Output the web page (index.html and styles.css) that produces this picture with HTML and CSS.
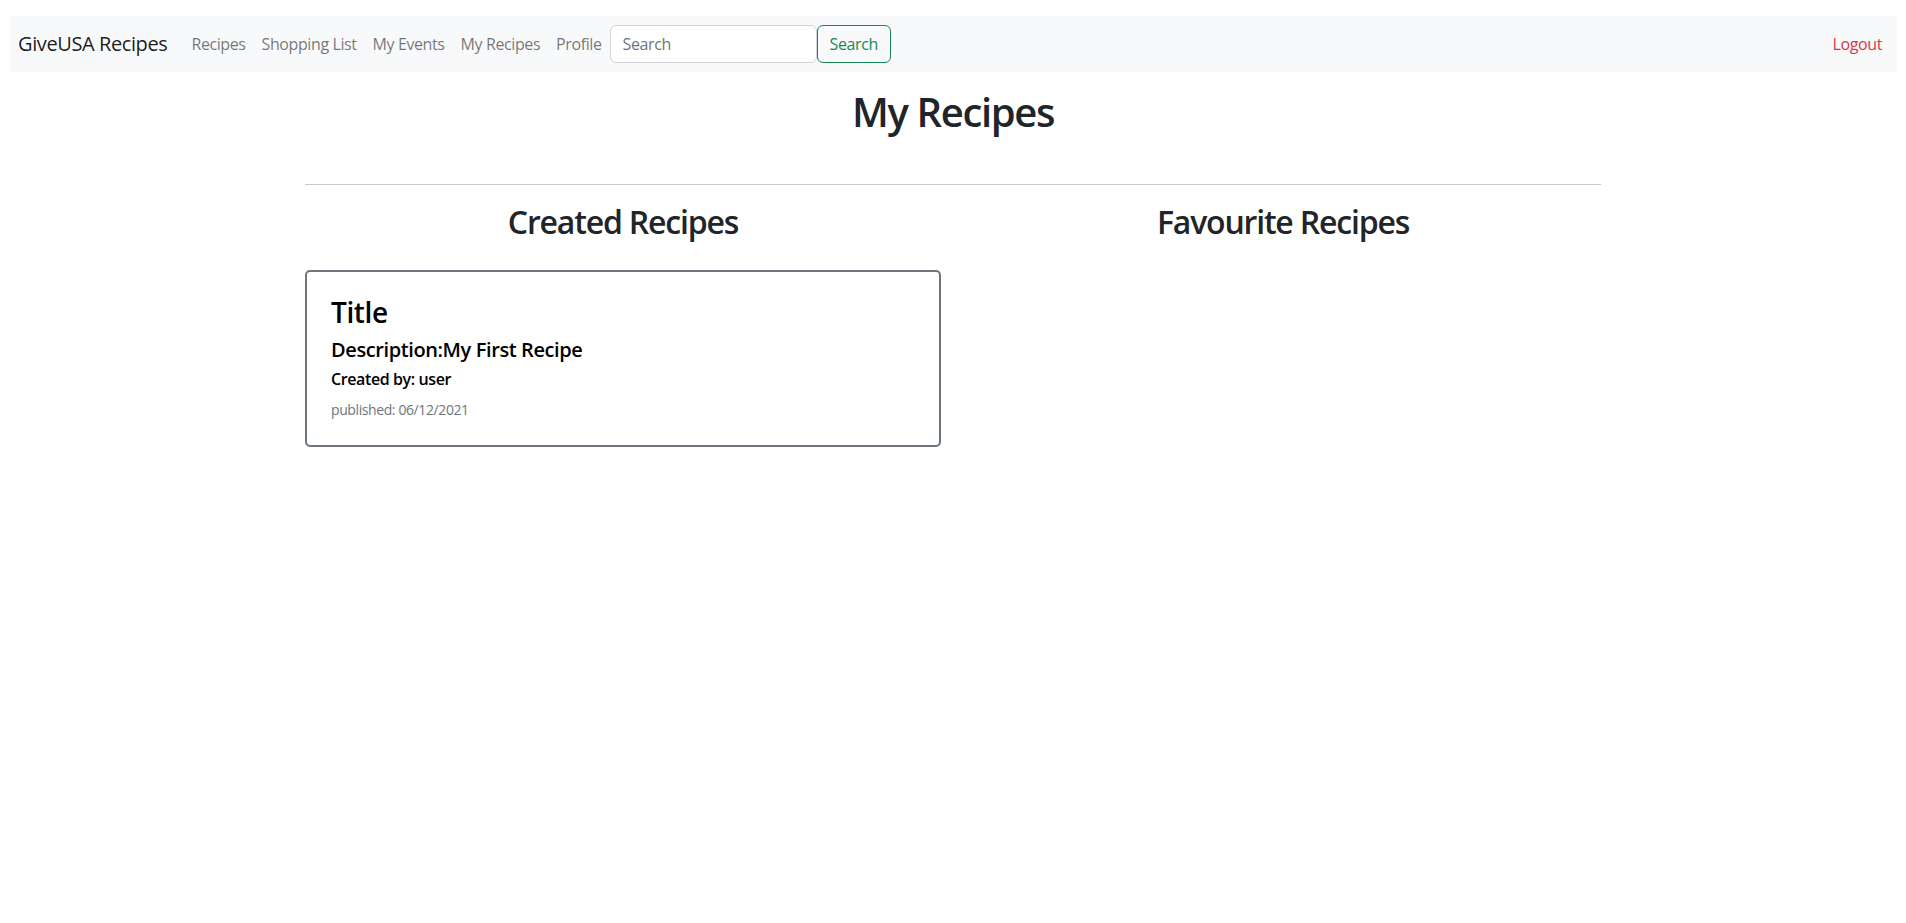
FILE: index.html
```html
<!DOCTYPE html>
<html lang="en">
<head>
<meta charset="utf-8">
<title>My Recipes</title>
<link rel="stylesheet" href="styles.css">
</head>
<body>
<nav class="navbar">
  <a class="brand" href="#">GiveUSA Recipes</a>
  <ul class="nav-links">
    <li><a class="nav-link" href="#">Recipes</a></li>
    <li><a class="nav-link" href="#">Shopping List</a></li>
    <li><a class="nav-link" href="#">My Events</a></li>
    <li><a class="nav-link" href="#">My Recipes</a></li>
    <li><a class="nav-link" href="#">Profile</a></li>
  </ul>
  <form class="search-form">
    <input class="search-input" type="search" placeholder="Search">
    <button class="search-btn" type="button">Search</button>
  </form>
  <a class="nav-link logout" href="#">Logout</a>
</nav>
<main class="container">
  <h1 class="page-title">My Recipes</h1>
  <hr class="divider">
  <div class="row">
    <section class="col">
      <h2 class="col-title">Created Recipes</h2>
      <div class="card">
        <h3 class="card-title">Title</h3>
        <h5 class="card-desc">Description:My First Recipe</h5>
        <h6 class="card-author">Created by: user</h6>
        <p class="card-text"><small class="muted">published: 06/12/2021</small></p>
      </div>
    </section>
    <section class="col">
      <h2 class="col-title">Favourite Recipes</h2>
    </section>
  </div>
</main>
</body>
</html>
```
FILE: styles.css
```css
* { box-sizing: border-box; }
html, body { margin: 0; padding: 0; }
body {
  font-family: "Open Sans", "Noto Sans", sans-serif;
  font-size: 16px;
  line-height: 1.5;
  letter-spacing: -0.025em;
  color: #212529;
  background: #fff;
}
a { text-decoration: none; }

.navbar {
  display: flex;
  align-items: center;
  margin: 16px 9px 0 10px;
  height: 56px;
  padding: 8px 7px 8px 8px;
  background: #f8f9fa;
}
.brand {
  font-size: 20px;
  line-height: 30px;
  color: rgba(0,0,0,.9);
  margin-right: 16px;
  padding: 5px 0;
}
.nav-links {
  display: flex;
  list-style: none;
  margin: 0;
  padding: 0;
}
.nav-link {
  display: block;
  padding: 8px;
  color: rgba(0,0,0,.55);
  font-size: 16px;
  line-height: 24px;
}
.search-form {
  display: flex;
  align-items: center;
}
.search-input {
  width: 207px;
  height: 38px;
  padding: 6px 12px;
  font: inherit;
  font-size: 16px;
  letter-spacing: inherit;
  color: #212529;
  background: #fff;
  border: 1px solid #ced4da;
  border-radius: 6px;
  outline: none;
}
.search-input::placeholder { color: #6c757d; }
.search-btn {
  height: 38px;
  padding: 6px 12px;
  font: inherit;
  font-size: 16px;
  letter-spacing: inherit;
  color: #198754;
  background: transparent;
  border: 1px solid #198754;
  border-radius: 6px;
}
.logout {
  margin-left: auto;
  color: #dc3545;
}

.container {
  width: 1296px;
  margin: 0 auto;
}
.page-title {
  margin: 16px 0 48px;
  font-size: 40px;
  line-height: 1.2;
  font-weight: 600;
  letter-spacing: -0.034em;
  text-align: center;
}
.divider {
  margin: 0 0 18px;
  border: 0;
  border-top: 1px solid #c8c9ca;
  height: 0;
}
.row {
  display: grid;
  grid-template-columns: 1fr 1fr;
  column-gap: 24px;
}
.col-title {
  margin: 0 0 8px;
  font-size: 32px;
  line-height: 1.2;
  font-weight: 600;
  letter-spacing: -0.037em;
  text-align: center;
}
.card {
  margin-top: 29px;
  padding: 24px;
  border: 2px solid #6c757d;
  border-radius: 5px;
  color: #000;
}
.card-title {
  margin: 0 0 8px;
  font-size: 28px;
  line-height: 1.2;
  font-weight: 600;
}
.card-desc {
  margin: 0 0 8px;
  font-size: 20px;
  line-height: 1.2;
  font-weight: 600;
}
.card-author {
  margin: 0 0 8px;
  font-size: 16px;
  line-height: 1.2;
  font-weight: 600;
}
.card-text {
  margin: 0;
}
.muted {
  font-size: 14px;
  color: #6c757d;
}
```
